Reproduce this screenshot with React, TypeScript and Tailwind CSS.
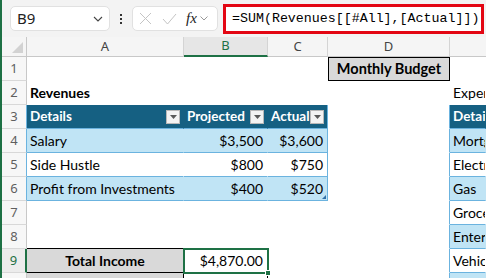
import React from 'react';
import { twMerge } from 'tailwind-merge';

type Kind = 'plain' | 'band' | 'white' | 'head';

// gridlines are switched off on this sheet, so plain cells carry a clear border
const kindCls: Record<Kind, string> = {
  plain: 'bg-white border-r border-b border-transparent',
  band: 'bg-[#c0e4f5] border-r border-b border-r-[#c0e4f5] border-b-[#6bb3df]',
  white: 'bg-white border-r border-b border-r-white border-b-[#6bb3df]',
  head: 'bg-[#156082] text-white font-bold text-[13.5px] border-r border-b border-r-[#156082] border-b-[#6bb3df]',
};

function Cell({
  kind = 'plain',
  className,
  children,
}: {
  kind?: Kind;
  className?: string;
  children?: React.ReactNode;
}) {
  return (
    <div
      className={twMerge(
        'h-full flex items-center px-[3px] whitespace-nowrap overflow-hidden text-black',
        kindCls[kind],
        className
      )}
    >
      {children}
    </div>
  );
}

function RowHead({ n, edge = 'grey' }: { n: number; edge?: 'grey' | 'blue' | 'sel' }) {
  const edgeCls =
    edge === 'blue'
      ? 'border-r-[#6bb3df]'
      : edge === 'sel'
      ? 'border-r-2 border-r-[#1e7145] text-[#1e7145] bg-[#ececec]'
      : 'border-r-[#c8c8c8]';
  return (
    <div
      className={twMerge(
        "h-full flex items-center justify-center bg-[#f7f7f7] border-r border-b border-b-[#d8d8d8] text-[#5f5f5f] text-[13px] font-['Noto_Sans',sans-serif]",
        edgeCls
      )}
    >
      {n}
    </div>
  );
}

function Filter() {
  return (
    <span className="ml-auto w-[14px] h-[14px] bg-[#f3f3f3] border border-[#b8b8b8] flex items-center justify-center shrink-0">
      <svg width="7" height="4" viewBox="0 0 7 4">
        <path d="M0 0h7L3.5 4z" fill="#595959" />
      </svg>
    </span>
  );
}

function ColHead({ label, sel, last }: { label: string; sel?: boolean; last?: boolean }) {
  return (
    <div
      className={twMerge(
        "h-full flex items-center justify-center bg-[#f5f5f5] border-b border-b-[#c8c8c8] text-[#444] text-[13px] font-['Noto_Sans',sans-serif]",
        last ? '' : 'border-r border-r-[#d4d4d4]',
        sel ? 'bg-[#e6e6e6] text-[#1e7145] border-b-2 border-b-[#1e7145]' : ''
      )}
    >
      {label}
    </div>
  );
}

export default function App() {
  return (
    <div className="w-[486px] h-[278px] overflow-hidden border-l-2 border-[#1e7145] bg-white font-[Lato,sans-serif] text-[14px]">
      {/* formula bar */}
      <div className="h-[37px] bg-[#f3f3f3] flex items-center">
        <div className="ml-[8px] w-[100px] h-[25px] bg-white border border-[#e1e1e1] rounded-[5px] flex items-center pl-[6px] pr-[6px]">
          <span className="text-[15px] text-[#222] font-['Noto_Sans',sans-serif]">B9</span>
          <svg className="ml-auto" width="10" height="6" viewBox="0 0 10 6">
            <path d="M1 1l4 4 4-4" fill="none" stroke="#444" strokeWidth="1.1" />
          </svg>
        </div>
        <div className="ml-[10px] flex flex-col gap-[2px]">
          <span className="w-[2px] h-[2px] bg-[#333]" />
          <span className="w-[2px] h-[2px] bg-[#333]" />
          <span className="w-[2px] h-[2px] bg-[#333]" />
        </div>
        <div className="ml-[10px] w-[86px] h-[25px] bg-white border border-[#e1e1e1] rounded-[5px] flex items-center pl-[6px]">
          <svg width="13" height="13" viewBox="0 0 13 13">
            <path d="M1 1l11 11M12 1L1 12" stroke="#c4c4c4" strokeWidth="1" />
          </svg>
          <svg className="ml-[10px]" width="15" height="12" viewBox="0 0 15 12">
            <path d="M1 6l4.5 5L14 1" fill="none" stroke="#c4c4c4" strokeWidth="1" />
          </svg>
          <span className="ml-[9px] italic text-[15px] text-[#222] font-['Liberation_Serif',serif]">fx</span>
          <svg className="ml-[3px]" width="8" height="5" viewBox="0 0 8 5">
            <path d="M0.5 0.5l3.5 3.5 3.5-3.5" fill="none" stroke="#999" strokeWidth="1" />
          </svg>
        </div>
        <div className="ml-[5px] w-[261px] h-[30px] bg-white border-[3px] border-[#e30613] flex items-center pl-[6px]">
          <span className="text-[13.3px] text-black font-['Liberation_Mono',monospace]">
            =SUM(Revenues[[#All],[Actual]])
          </span>
        </div>
      </div>

      {/* sheet */}
      <div className="grid grid-cols-[25px_157px_84px_60px_122px_1fr] grid-rows-[20px_repeat(10,24px)]">
        {/* column headers */}
        <div className="h-full bg-[#f5f5f5] border-r border-b border-[#c8c8c8] flex items-end justify-end p-[3px]">
          <svg width="11" height="11" viewBox="0 0 11 11">
            <path d="M11 0v11H0z" fill="#d2d2d2" />
          </svg>
        </div>
        <ColHead label="A" />
        <ColHead label="B" sel />
        <ColHead label="C" />
        <ColHead label="D" />
        <ColHead label="" last />

        {/* row 1 */}
        <RowHead n={1} />
        <Cell />
        <Cell />
        <Cell />
        <Cell className="bg-[#d9d9d9] border border-black justify-center font-bold text-[14.5px]">Monthly Budget</Cell>
        <Cell />

        {/* row 2 */}
        <RowHead n={2} />
        <Cell className="font-bold">Revenues</Cell>
        <Cell />
        <Cell />
        <Cell />
        <Cell>Expenses</Cell>

        {/* row 3 */}
        <RowHead n={3} edge="blue" />
        <Cell kind="head">
          Details
          <Filter />
        </Cell>
        <Cell kind="head">
          Projected
          <Filter />
        </Cell>
        <Cell kind="head" className="border-r-[#6bb3df]">
          Actual
          <Filter />
        </Cell>
        <Cell className="border-r-[#6bb3df]" />
        <Cell kind="head">Details</Cell>

        {/* row 4 */}
        <RowHead n={4} edge="blue" />
        <Cell kind="band">Salary</Cell>
        <Cell kind="band" className="justify-end pr-[4px]">$3,500</Cell>
        <Cell kind="band" className="justify-end pr-[4px] border-r-[#6bb3df]">$3,600</Cell>
        <Cell className="border-r-[#6bb3df]" />
        <Cell kind="band">Mortgage</Cell>

        {/* row 5 */}
        <RowHead n={5} edge="blue" />
        <Cell kind="white">Side Hustle</Cell>
        <Cell kind="white" className="justify-end pr-[4px]">$800</Cell>
        <Cell kind="white" className="justify-end pr-[4px] border-r-[#6bb3df]">$750</Cell>
        <Cell className="border-r-[#6bb3df]" />
        <Cell kind="white">Electricity</Cell>

        {/* row 6 */}
        <RowHead n={6} edge="blue" />
        <Cell kind="band">Profit from Investments</Cell>
        <Cell kind="band" className="justify-end pr-[4px]">$400</Cell>
        <div className="relative h-full">
          <Cell kind="band" className="justify-end pr-[4px] border-r-[#6bb3df]">$520</Cell>
          <svg className="absolute right-[2px] bottom-[2px]" width="4" height="4" viewBox="0 0 4 4">
            <path d="M4 0v4H0z" fill="#2f6fa8" />
          </svg>
        </div>
        <Cell className="border-r-[#6bb3df]" />
        <Cell kind="band">Gas</Cell>

        {/* row 7 */}
        <RowHead n={7} />
        <Cell />
        <Cell />
        <Cell />
        <Cell className="border-r-[#6bb3df]" />
        <Cell kind="white">Groceries</Cell>

        {/* row 8 */}
        <RowHead n={8} />
        <Cell className="border-b-black" />
        <Cell />
        <Cell />
        <Cell className="border-r-[#6bb3df]" />
        <Cell kind="band">Entertainment</Cell>

        {/* row 9 */}
        <RowHead n={9} edge="sel" />
        <Cell className="bg-[#d9d9d9] border-r-black border-b-black justify-center font-bold">Total Income</Cell>
        <div className="relative h-full">
          <Cell className="justify-end pr-[4px] border-r-black border-b-black">$4,870.00</Cell>
          <div className="absolute -left-[1px] -top-[1px] -right-[1px] -bottom-[1px] border-2 border-[#1e7145]" />
          <div className="absolute -right-[3px] -bottom-[3px] w-[6px] h-[6px] bg-[#1e7145] border border-white" />
        </div>
        <Cell />
        <Cell className="border-r-[#6bb3df]" />
        <Cell kind="white">Vehicle</Cell>

        {/* row 10 */}
        <RowHead n={10} />
        <Cell className="bg-[#d9d9d9] border-r-black border-b-black" />
        <Cell className="border-r-black border-b-black" />
        <Cell />
        <Cell className="border-r-[#6bb3df]" />
        <Cell kind="band">Insurance</Cell>
      </div>
    </div>
  );
}
